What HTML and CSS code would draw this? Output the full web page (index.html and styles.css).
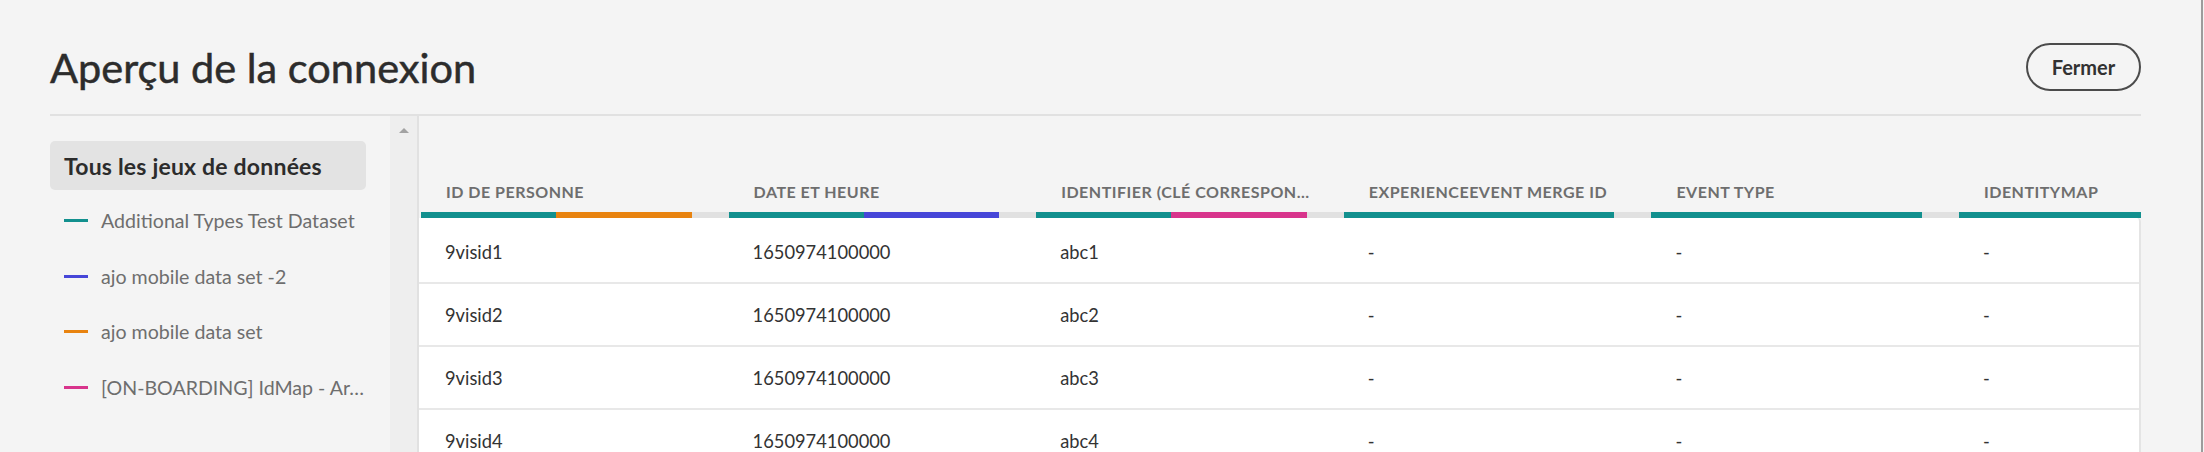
FILE: index.html
```html
<!DOCTYPE html>
<html lang="fr">
<head>
<meta charset="utf-8">
<title>Aperçu de la connexion</title>
<link rel="stylesheet" href="styles.css">
</head>
<body>
<div class="page">
  <header class="top">
    <h1 class="title">Aperçu de la connexion</h1>
    <button class="close-btn">Fermer</button>
  </header>
  <div class="main">
    <aside class="side">
      <div class="all-sets">Tous les jeux de données</div>
      <ul class="legend">
        <li class="legend-item"><span class="mark teal"></span>Additional Types Test Dataset</li>
        <li class="legend-item"><span class="mark blue"></span>ajo mobile data set -2</li>
        <li class="legend-item"><span class="mark orange"></span>ajo mobile data set</li>
        <li class="legend-item"><span class="mark pink"></span>[ON-BOARDING] IdMap - Ar…</li>
      </ul>
    </aside>
    <div class="track"><span class="arrow-up"></span></div>
    <section class="table">
      <div class="thead">
        <div class="th"><span class="th-label">ID de personne</span><div class="bar"><span class="seg teal"></span><span class="seg orange"></span></div></div>
        <div class="th"><span class="th-label">Date et heure</span><div class="bar"><span class="seg teal"></span><span class="seg blue"></span></div></div>
        <div class="th"><span class="th-label">Identifier (clé correspon…</span><div class="bar"><span class="seg teal"></span><span class="seg pink"></span></div></div>
        <div class="th"><span class="th-label">ExperienceEvent Merge ID</span><div class="bar"><span class="seg teal"></span></div></div>
        <div class="th"><span class="th-label">Event Type</span><div class="bar"><span class="seg teal"></span></div></div>
        <div class="th"><span class="th-label">identityMap</span><div class="bar"><span class="seg teal"></span></div></div>
      </div>
      <div class="tbody">
        <div class="row"><div class="td">9visid1</div><div class="td">1650974100000</div><div class="td">abc1</div><div class="td">-</div><div class="td">-</div><div class="td">-</div></div>
        <div class="row"><div class="td">9visid2</div><div class="td">1650974100000</div><div class="td">abc2</div><div class="td">-</div><div class="td">-</div><div class="td">-</div></div>
        <div class="row"><div class="td">9visid3</div><div class="td">1650974100000</div><div class="td">abc3</div><div class="td">-</div><div class="td">-</div><div class="td">-</div></div>
        <div class="row"><div class="td">9visid4</div><div class="td">1650974100000</div><div class="td">abc4</div><div class="td">-</div><div class="td">-</div><div class="td">-</div></div>
      </div>
    </section>
  </div>
</div>
</body>
</html>
```
FILE: styles.css
```css
* { box-sizing: border-box; }
html, body {
  margin: 0;
  padding: 0;
  background: #f4f4f4;
  height: 452px;
  overflow: hidden;
}
body {
  font-family: Lato, "Liberation Sans", sans-serif;
  color: #2c2c2c;
}
.page {
  width: 2203px;
  height: 452px;
  overflow: hidden;
  border-right: 2px solid #9c9c9c;
  padding: 0 60px 0 50px;
}
.top {
  display: flex;
  justify-content: space-between;
  align-items: center;
  padding-top: 43px;
  padding-bottom: 23px;
  border-bottom: 2px solid #e1e1e1;
}
.title {
  margin: 0;
  font-size: 41.5px;
  line-height: 48px;
  font-weight: 400;
  color: #2c2c2c;
  -webkit-text-stroke: 0.5px #2c2c2c;
}
.close-btn {
  width: 115px;
  height: 48px;
  border: 2px solid #4b4b4b;
  border-radius: 24px;
  background: transparent;
  font-family: Lato, "Liberation Sans", sans-serif;
  font-weight: 700;
  font-size: 20px;
  color: #323232;
  padding: 0;
}
.main {
  display: flex;
  height: 336px;
}
.side {
  width: 340px;
  flex: 0 0 340px;
  padding: 25px 24px 0 0;
}
.all-sets {
  height: 49px;
  display: flex;
  align-items: center;
  padding-left: 14px;
  background: #e3e3e3;
  border-radius: 5px;
  font-weight: 700;
  font-size: 23px;
  letter-spacing: 0.2px;
  color: #2c2c2c;
  white-space: nowrap;
}
.legend {
  list-style: none;
  margin: 3px 0 0;
  padding: 0;
}
.legend-item {
  height: 55.5px;
  display: flex;
  align-items: center;
  padding-left: 14px;
  font-size: 19.6px;
  color: #6e6e6e;
  white-space: nowrap;
}
.mark {
  width: 24px;
  height: 3px;
  margin-right: 13px;
  flex: 0 0 24px;
}
.teal { background: #12908e; }
.blue { background: #4646d8; }
.orange { background: #e8830f; }
.pink { background: #d8348c; }
.track {
  flex: 0 0 29px;
  width: 29px;
  background: #eeeeee;
  border-right: 2px solid #e1e1e1;
  display: flex;
  justify-content: center;
  align-items: flex-start;
}
.arrow-up {
  margin-top: 12px;
  width: 0;
  height: 0;
  border-left: 5.5px solid transparent;
  border-right: 5.5px solid transparent;
  border-bottom: 5px solid #a2a2a2;
}
.table {
  flex: 1 1 auto;
  min-width: 0;
  overflow: hidden;
}
.thead {
  display: flex;
  align-items: flex-end;
  height: 102px;
  padding-left: 2px;
}
.th {
  flex: 0 0 307.6px;
  display: flex;
  flex-direction: column;
}
.th-label {
  padding-left: 25px;
  margin-bottom: 10px;
  font-size: 16px;
  line-height: 20px;
  font-weight: 700;
  letter-spacing: 0.5px;
  text-transform: uppercase;
  color: #6e6e6e;
  white-space: nowrap;
}
.bar {
  height: 6px;
  background: #e1e1e1;
  display: flex;
  padding-right: 37px;
}
.seg {
  flex: 1 1 0;
  height: 6px;
}
.tbody {
  background: #ffffff;
  border-right: 2px solid #e4e4e4;
  border-top-right-radius: 4px;
  padding-top: 3px;
}
.row {
  display: flex;
  align-items: center;
  height: 63px;
  padding-left: 2px;
  border-bottom: 2px solid #e8e8e8;
}
.td {
  flex: 0 0 307.6px;
  padding-left: 24px;
  font-size: 18.3px;
  color: #333333;
  white-space: nowrap;
}
```
